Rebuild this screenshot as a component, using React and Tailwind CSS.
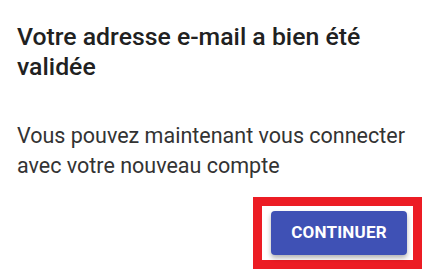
import React from "react";

const App = () => {
  return (
    <div className="w-[426px] h-[275px] bg-white font-['Roboto',_'Liberation_Sans',_sans-serif] overflow-hidden">
      <div className="pl-[17px] pr-[4px] pt-[21.5px]">
        <h2 className="text-[24.8px] leading-[30px] font-medium text-[#212121]">
          Votre adresse e-mail a bien été
          <br />
          validée
        </h2>
        <p className="mt-[39px] text-[21.5px] leading-[30px] text-[#333333]">
          Vous pouvez maintenant vous connecter
          <br />
          avec votre nouveau compte
        </p>
        <div className="mt-[16px] flex justify-end">
          <div className="border-[9px] border-[#ec1c24] pt-[5px] pb-[5px] pl-[9px] pr-[6px]">
            <button className="h-[44px] w-[136px] rounded-[4px] bg-[#3f51b5] text-white text-[17px] font-bold tracking-[0.2px] shadow-[0_3px_5px_rgba(0,0,0,0.3)]">
              CONTINUER
            </button>
          </div>
        </div>
      </div>
    </div>
  );
};

export default App;
